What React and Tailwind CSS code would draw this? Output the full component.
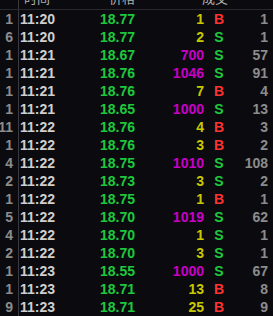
import React from "react";

const rows = [
  ["1", "11:20", "18.77", "1", "B", "1"],
  ["6", "11:20", "18.77", "2", "S", "1"],
  ["1", "11:21", "18.67", "700", "S", "57"],
  ["1", "11:21", "18.76", "1046", "S", "91"],
  ["1", "11:21", "18.76", "7", "B", "4"],
  ["1", "11:21", "18.65", "1000", "S", "13"],
  ["11", "11:22", "18.76", "4", "B", "3"],
  ["1", "11:22", "18.76", "3", "B", "2"],
  ["4", "11:22", "18.75", "1010", "S", "108"],
  ["2", "11:22", "18.73", "3", "S", "2"],
  ["1", "11:22", "18.75", "1", "B", "1"],
  ["5", "11:22", "18.70", "1019", "S", "62"],
  ["4", "11:22", "18.70", "1", "S", "1"],
  ["2", "11:22", "18.70", "3", "S", "1"],
  ["1", "11:23", "18.55", "1000", "S", "67"],
  ["1", "11:23", "18.71", "13", "B", "8"],
  ["9", "11:23", "18.71", "25", "B", "9"],
];

export default function App() {
  return (
    <div
      className="w-[273px] h-[316px] overflow-hidden bg-[#0b0b0f] text-[14px] font-bold"
      style={{ fontFamily: '"Liberation Sans", "Noto Sans CJK SC", sans-serif' }}
    >
      <div className="flex h-[10px] overflow-hidden items-end border-b border-[#2a2a2e] text-[#b0b0b0] font-normal text-[13px] leading-none">
        <div className="w-[19px] h-full border-r border-[#3a3a3e]"></div>
        <div className="w-[56px] pl-[5px] mb-[4px]">时间</div>
        <div className="w-[60px] text-right mb-[4px]">价格</div>
        <div className="w-[69px] text-right mb-[4px]">
          <span className="relative left-[24px]">成交</span>
        </div>
      </div>
      {rows.map((r, i) => {
        const big = parseInt(r[3], 10) >= 500;
        return (
          <div key={i} className="flex h-[18px] items-center leading-none">
            <div className="w-[19px] h-full flex items-center justify-end pr-[5px] border-r border-[#3a3a3e] text-[#8c8c8c]">
              {r[0]}
            </div>
            <div className="w-[56px] pl-[1px] text-[#cfcfcf]">{r[1]}</div>
            <div className="w-[60px] text-right text-[#1ec83c]">{r[2]}</div>
            <div className={`w-[69px] text-right ${big ? "text-[#c800c8]" : "text-[#c8c800]"}`}>{r[3]}</div>
            <div className={`w-[30px] text-center ${r[4] === "B" ? "text-[#ff3232]" : "text-[#1ec83c]"}`}>{r[4]}</div>
            <div className="w-[34px] text-right text-[#8c8c8c]">{r[5]}</div>
          </div>
        );
      })}
    </div>
  );
}
